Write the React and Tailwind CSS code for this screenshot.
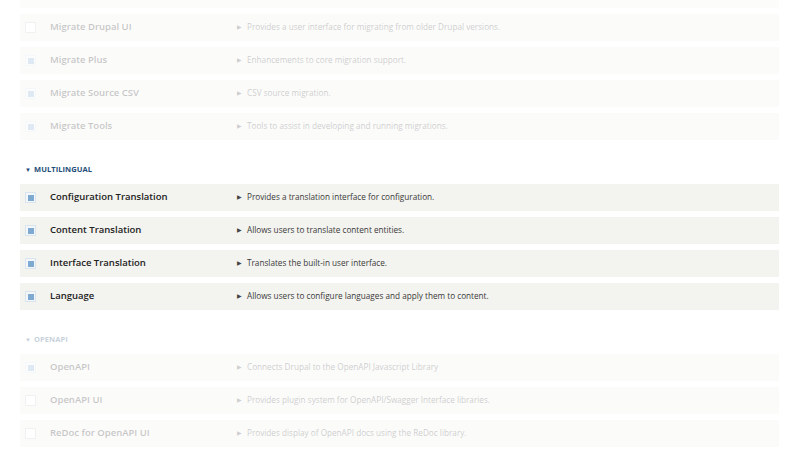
import React from 'react';

const sections = [
    {
        title: null,
        faded: true,
        modules: [
            { name: 'Migrate Drupal UI', desc: 'Provides a user interface for migrating from older Drupal versions.', checked: false },
            { name: 'Migrate Plus', desc: 'Enhancements to core migration support.', checked: true },
            { name: 'Migrate Source CSV', desc: 'CSV source migration.', checked: true },
            { name: 'Migrate Tools', desc: 'Tools to assist in developing and running migrations.', checked: true },
        ],
    },
    {
        title: 'Multilingual',
        faded: false,
        modules: [
            { name: 'Configuration Translation', desc: 'Provides a translation interface for configuration.', checked: true },
            { name: 'Content Translation', desc: 'Allows users to translate content entities.', checked: true },
            { name: 'Interface Translation', desc: 'Translates the built-in user interface.', checked: true },
            { name: 'Language', desc: 'Allows users to configure languages and apply them to content.', checked: true },
        ],
    },
    {
        title: 'OpenAPI',
        faded: true,
        modules: [
            { name: 'OpenAPI', desc: 'Connects Drupal to the OpenAPI Javascript Library', checked: true },
            { name: 'OpenAPI UI', desc: 'Provides plugin system for OpenAPI/Swagger Interface libraries.', checked: false },
            { name: 'ReDoc for OpenAPI UI', desc: 'Provides display of OpenAPI docs using the ReDoc library.', checked: false },
        ],
    },
];

function Checkbox({ checked }) {
    return (
        <div className={`w-[11px] h-[11px] flex items-center justify-center border ${checked ? 'border-[#d9e4ee] bg-[#f4f7fa]' : 'border-[#c9c9c9] bg-white'}`}>
            {checked && <div className="w-[6px] h-[6px] bg-[#7ea9d1]"></div>}
        </div>
    );
}

function ModuleRow({ mod }) {
    return (
        <div className="h-[27px] mb-[6px] bg-[#f3f3ef] flex items-center">
            <div className="w-[30px] pl-[5px] flex items-center">
                <Checkbox checked={mod.checked} />
            </div>
            <div className="w-[187px] text-[9.5px] font-semibold text-[#222]">{mod.name}</div>
            <div className="flex items-center text-[8.2px] text-[#3a3a3a]">
                <span className="text-[6px] text-[#444] mr-[5px]">▶</span>
                {mod.desc}
            </div>
        </div>
    );
}

export default function App() {
    return (
        <div className="w-[800px] h-[450px] overflow-hidden bg-white pl-[20px] pr-[21px] font-['Open_Sans',sans-serif]">
            {/* tail of the row above, scrolled out of view */}
            <div className="h-[8px] mb-[6px] bg-[#f3f3ef] opacity-25"></div>
            {sections.map((s, i) => (
                <div key={i} className={s.faded ? 'opacity-25' : ''}>
                    {s.title && (
                        <div className="mt-[23px] h-[14px] mb-[7px] pl-[5px] flex items-center text-[7.5px] font-bold uppercase text-[#1d4d78] tracking-[0.01em]">
                            <span className="text-[6px] mr-[3px]">▼</span>
                            {s.title}
                        </div>
                    )}
                    {s.modules.map((m) => <ModuleRow key={m.name} mod={m} />)}
                </div>
            ))}
        </div>
    );
}
